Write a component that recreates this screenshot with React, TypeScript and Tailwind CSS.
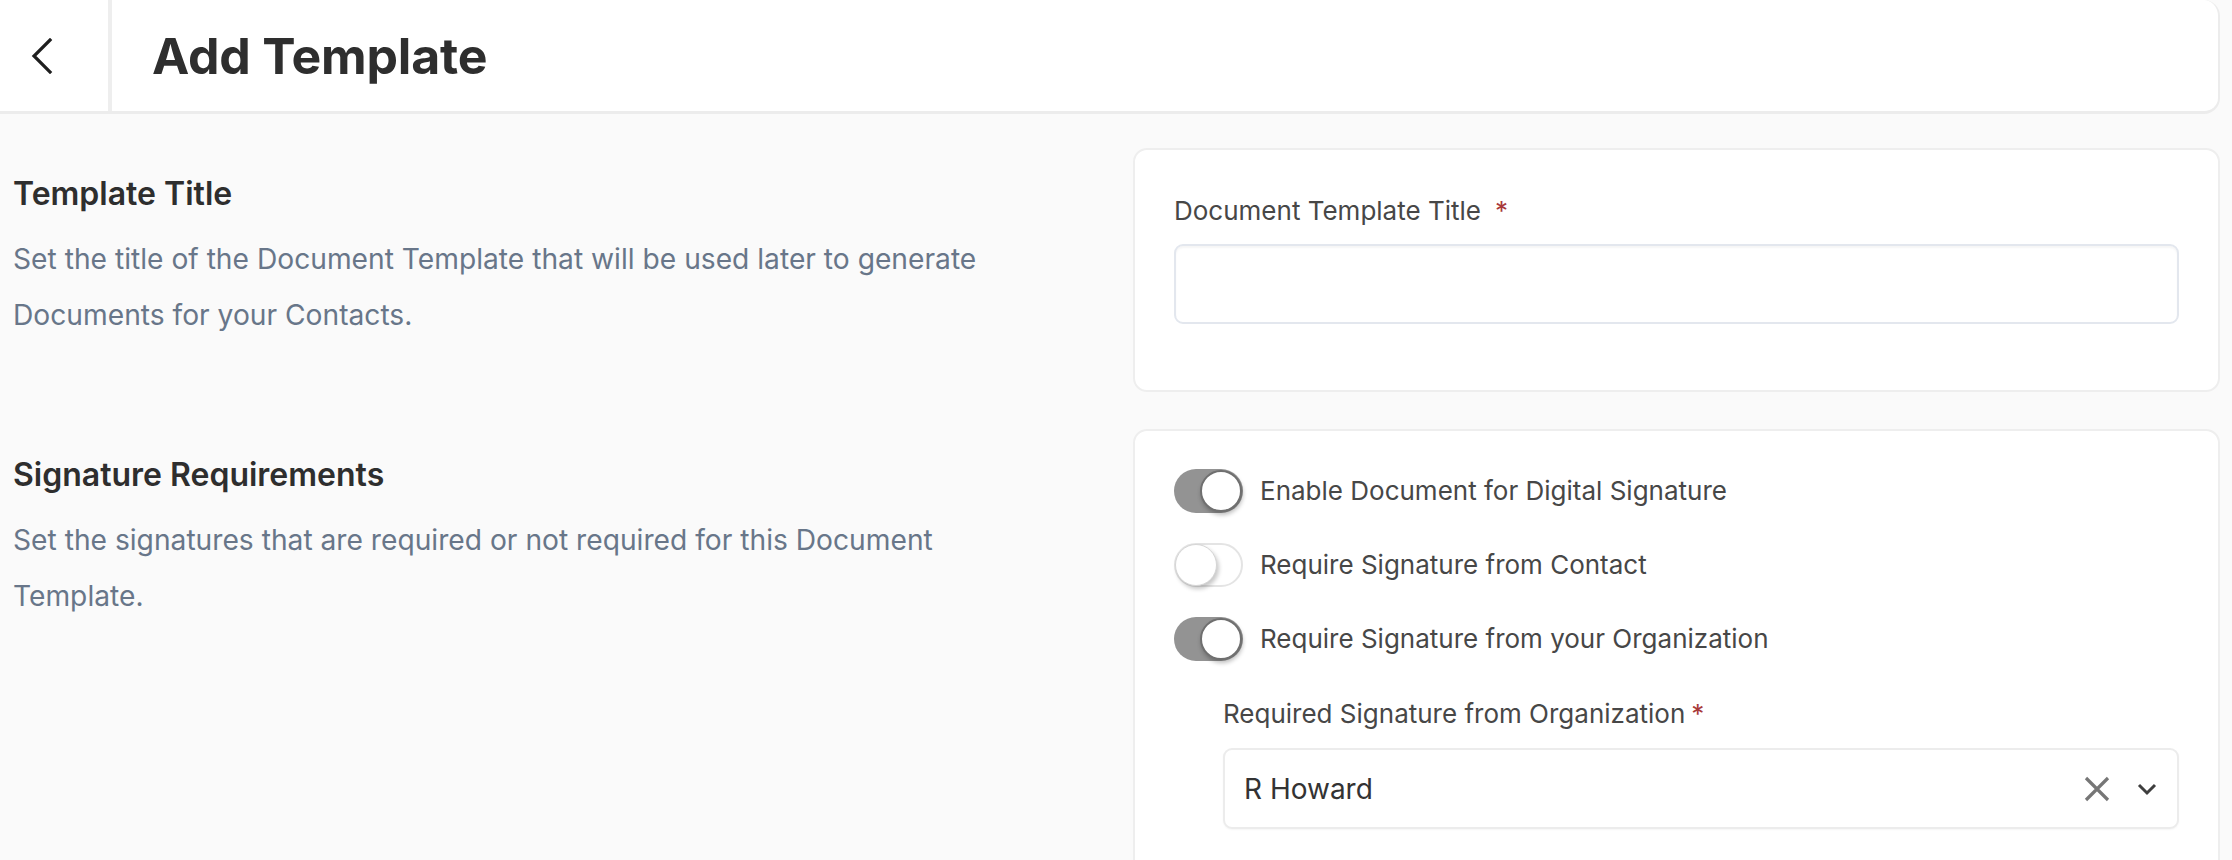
import React from "react";

function Toggle({ on }: { on: boolean }) {
  return (
    <div
      className={
        on
          ? "relative h-[44px] w-[69px] shrink-0 rounded-full bg-[#939393]"
          : "relative h-[44px] w-[69px] shrink-0 rounded-full border-2 border-[#e4e4e4] bg-white"
      }
    >
      <div
        className={
          on
            ? "absolute right-[1px] top-[1px] h-[42px] w-[42px] rounded-full border-2 border-[#6f6f6f] bg-white shadow-[1px_3px_4px_rgba(0,0,0,0.25)]"
            : "absolute left-[-1px] top-[-1px] h-[42px] w-[42px] rounded-full border border-[#d6d6d6] bg-white shadow-[2px_3px_4px_rgba(0,0,0,0.22)]"
        }
      />
    </div>
  );
}

function ToggleRow({ on, label }: { on: boolean; label: string }) {
  return (
    <div className="flex items-center gap-[17px]">
      <Toggle on={on} />
      <span className="text-[26px] leading-[44px] text-[#474747]">{label}</span>
    </div>
  );
}

export default function App() {
  return (
    <div
      className="min-h-[860px] w-full bg-[#fafafa]"
      style={{ fontFamily: "Inter, 'Noto Sans', sans-serif" }}
    >
      {/* Header */}
      <div className="mr-[12px] flex h-[114px] items-stretch rounded-r-[16px] border-b-[3px] border-r-2 border-[#ececec] bg-white">
        <div className="flex w-[108px] items-center pl-[31px]">
          <svg width="22" height="36" viewBox="0 0 22 36" fill="none">
            <polyline
              points="19,2 3,18 19,34"
              stroke="#1f1f1f"
              strokeWidth="3.2"
              strokeLinecap="square"
              strokeLinejoin="miter"
            />
          </svg>
        </div>
        <div className="w-[4px] bg-[#eeeeee]" />
        <div className="flex items-center pl-[40px]">
          <h1 className="text-[50px] font-bold leading-none tracking-[-0.2px] text-[#2e2e2e]">
            Add Template
          </h1>
        </div>
      </div>

      {/* Body */}
      <div className="flex flex-col gap-[37px] pl-[13px] pr-[12px] pt-[34px]">
        {/* Row 1 */}
        <div className="flex items-start justify-between">
          <div className="max-w-[1010px] pt-[22px]">
            <h2 className="text-[32px] font-semibold leading-[48px] text-[#2e2e2e]">
              Template Title
            </h2>
            <p className="mt-[13px] text-[28.2px] leading-[56px] text-[#687689]">
              Set the title of the Document Template that will be used later to generate
              Documents for your Contacts.
            </p>
          </div>
          <div className="w-[1087px] rounded-[14px] border-2 border-[#eeeeee] bg-white px-[39px] pb-[66px] pt-[39px]">
            <div className="flex items-center text-[26px] leading-[44px] text-[#474747]">
              <span>Document Template Title</span>
              <span className="ml-[14px] text-[#a83a3a]">*</span>
            </div>
            <div className="mt-[11px] h-[80px] w-full rounded-[9px] border-2 border-[#e3e7ee] bg-white shadow-[inset_0_2px_2px_rgba(0,0,0,0.04)]" />
          </div>
        </div>

        {/* Row 2 */}
        <div className="flex items-start justify-between">
          <div className="max-w-[1010px] pt-[22px]">
            <h2 className="text-[32px] font-semibold leading-[48px] text-[#2e2e2e]">
              Signature Requirements
            </h2>
            <p className="mt-[13px] text-[28.2px] leading-[56px] text-[#687689]">
              Set the signatures that are required or not required for this Document
              Template.
            </p>
          </div>
          <div className="w-[1087px] rounded-[14px] border-2 border-[#eeeeee] bg-white px-[39px] pb-[60px] pt-[38px]">
            <div className="flex flex-col gap-[30px]">
              <ToggleRow on={true} label="Enable Document for Digital Signature" />
              <ToggleRow on={false} label="Require Signature from Contact" />
              <ToggleRow on={true} label="Require Signature from your Organization" />
            </div>
            <div className="ml-[49px] mt-[31px]">
              <div className="flex items-center text-[26px] leading-[44px] text-[#474747]">
                <span>Required Signature from Organization</span>
                <span className="ml-[6px] text-[#a83a3a]">*</span>
              </div>
              <div className="mt-[12px] flex h-[81px] w-full items-center rounded-[9px] border-2 border-[#ececec] bg-white pl-[19px] pr-[20px] shadow-[0_1px_2px_rgba(0,0,0,0.04)]">
                <span className="flex-1 text-[28px] text-[#333333]">R Howard</span>
                <svg width="26" height="26" viewBox="0 0 26 26" fill="none">
                  <path d="M2 2L24 24M24 2L2 24" stroke="#767676" strokeWidth="3.2" />
                </svg>
                <svg className="ml-[27px]" width="20" height="14" viewBox="0 0 20 14" fill="none">
                  <path d="M2 3L10 11L18 3" stroke="#3e3e3e" strokeWidth="3" />
                </svg>
              </div>
            </div>
          </div>
        </div>
      </div>
    </div>
  );
}
